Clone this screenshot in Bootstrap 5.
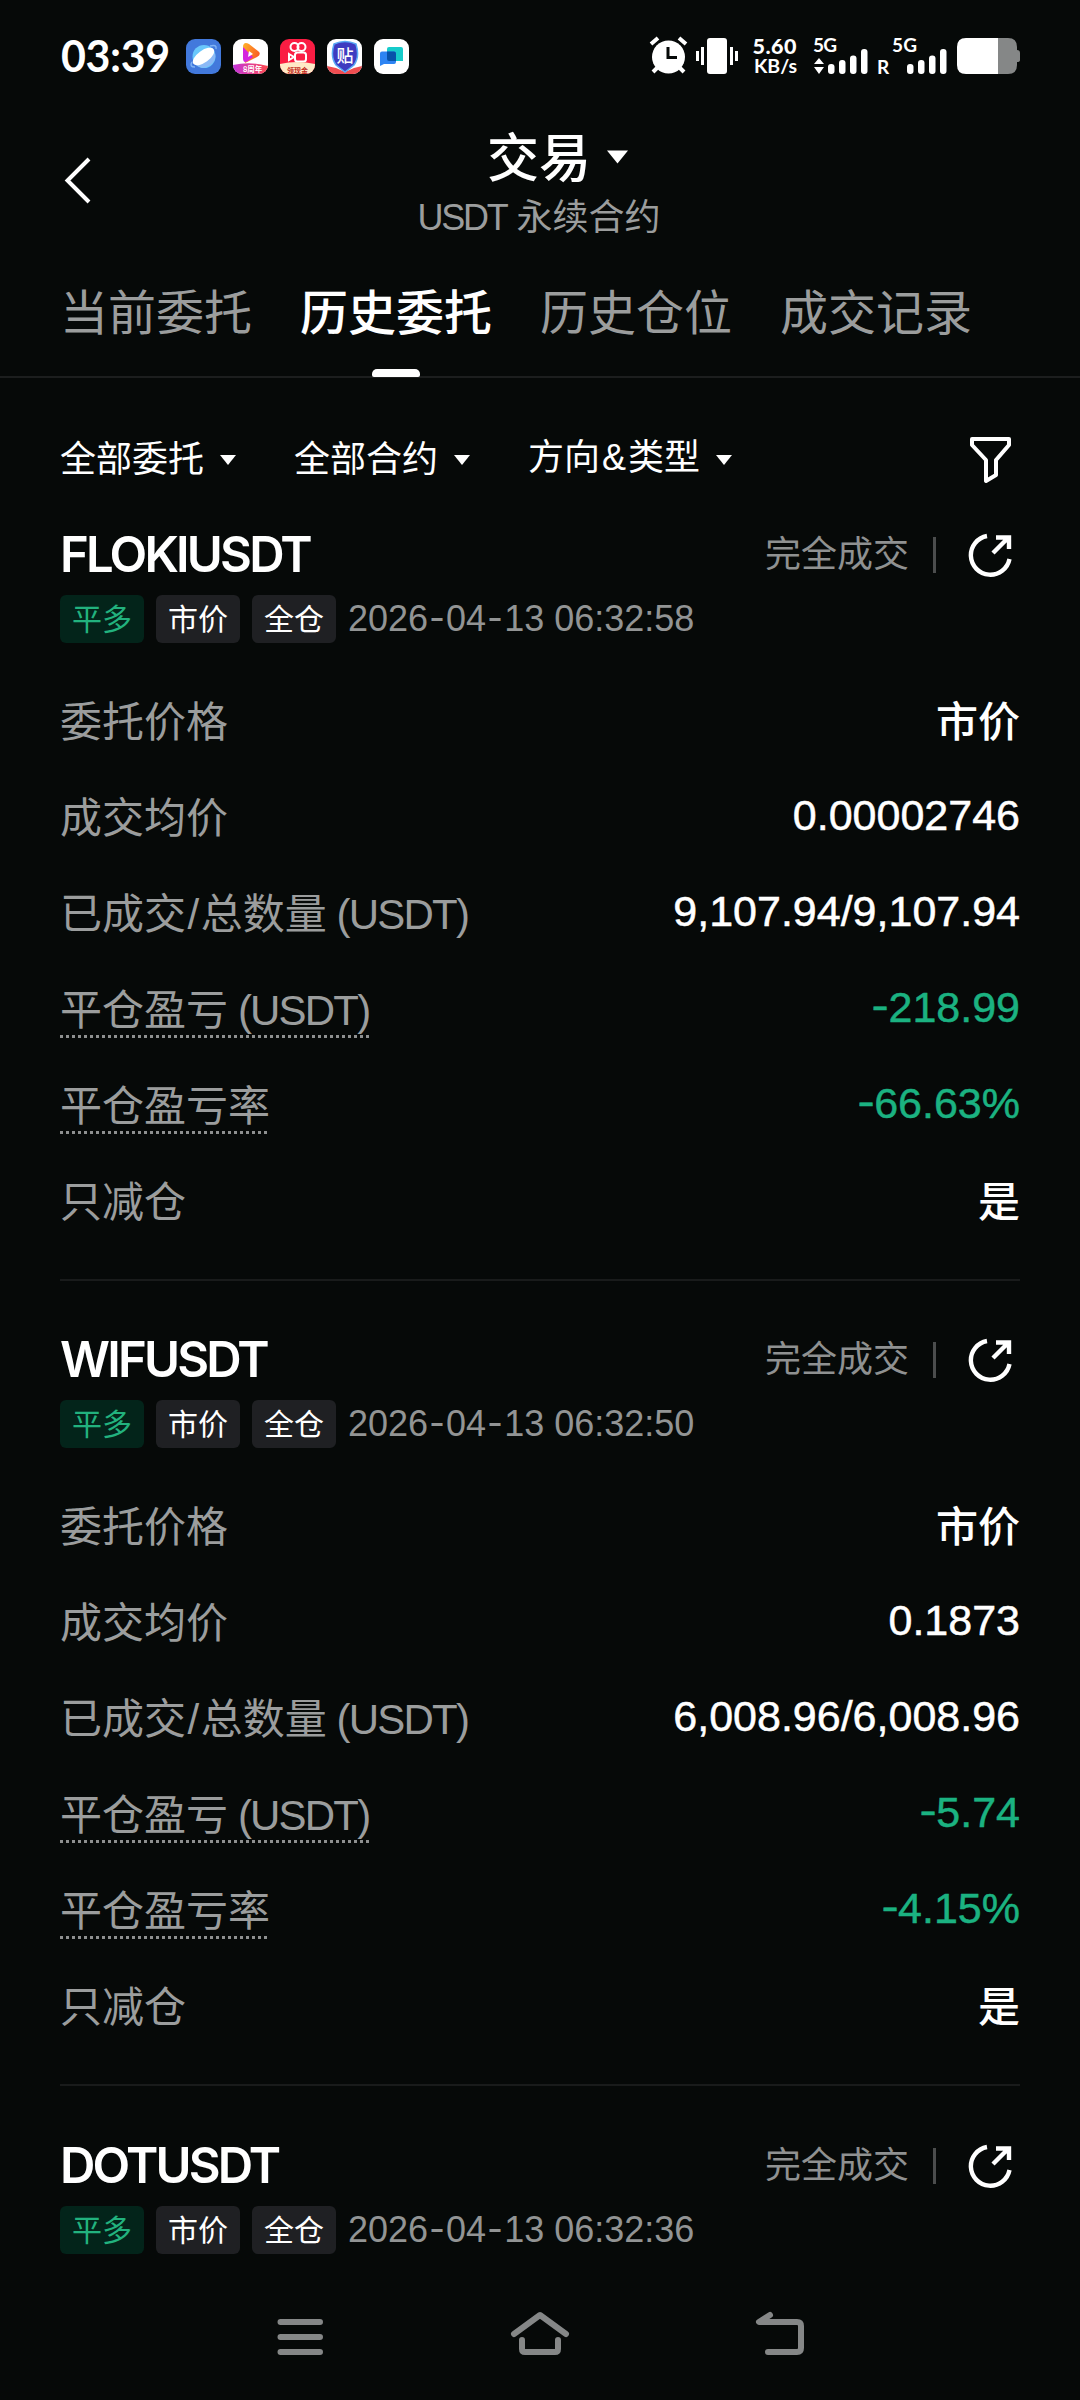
<!DOCTYPE html>
<html lang="zh-CN">
<head>
<meta charset="utf-8">
<meta name="viewport" content="width=device-width, initial-scale=1">
<title>交易</title>
<link href="https://cdn.jsdelivr.net/npm/bootstrap@5.3.0/dist/css/bootstrap.min.css" rel="stylesheet">
<style>
  body { background: #060908; color: #fff; font-family: "Liberation Sans", "Noto Sans CJK SC", sans-serif; width: 1080px; height: 2400px; overflow: hidden; }
  svg { display: block; flex: none; overflow: visible; }
  .dim { color: #9b9d9d; }
  .statusbar { height: 112px; padding: 0 60px 0 61px; font-family: Lato, "Noto Sans CJK SC", sans-serif; font-weight: 700; }
  .clock { font-size: 43px; line-height: 56px; width: 125px; letter-spacing: -.4px; }
  .app-icons { gap: 12px; }
  .app-head { height: 148px; padding: 17px 60px 0; }
  .head-title { font-size: 52px; line-height: 60px; font-weight: 500; gap: 16px; padding-left: 37px; }
  .head-sub { font-size: 36px; line-height: 58px; }
  .head-sub .latin { letter-spacing: -2.2px; }
  .order-tabs { height: 118px; padding: 0 60px; gap: 48px; border-bottom: 2px solid #1c1e1e; }
  .order-tab { font-size: 48px; line-height: 60px; padding-top: 24px; color: #9b9d9d; }
  .order-tab.active { color: #fff; font-weight: 500; }
  .order-tab.active::after { content: ""; display: block; width: 48px; height: 8px; border-radius: 5px 5px 2px 2px; background: #fff; margin: 25px auto 0; }
  .filters { height: 130px; padding: 32px 60px 0; font-size: 36px; line-height: 100px; }
  .filter-item { width: 234px; gap: 16px; height: 100px; }
  .amp { padding: 0 2px; }
  .order { margin: 0 60px; padding-top: 10px; }
  .order + .order { padding-top: 42px; }
  .order + .order:last-child { padding-top: 43px; }
  .order-top { height: 74px; }
  .pair { font-family: Inter, sans-serif; font-size: 49px; font-weight: 600; letter-spacing: -2.8px; line-height: 72px; }
  .state { font-size: 36px; color: #8f9191; }
  .vline { width: 3px; height: 36px; background: #4b4d4d; margin: 0 32px 0 24px; }
  .tags { height: 48px; gap: 12px; margin-top: 3px; }
  .tag { width: 84px; height: 48px; border-radius: 6px; background: #1f2023; font-size: 30px; line-height: 49px; text-align: center; }
  .tag-long { background: #03241a; color: #22b27e; }
  .stamp { font-size: 36px; color: #929494; }
  .stamp i { font-style: normal; display: inline-block; width: 18px; text-align: center; transform: translateY(-2px) scaleX(1.25); }
  .rows { padding: 30px 0; }
  .line { height: 96px; font-size: 42px; line-height: 60px; }
  .line .dim { padding-top: 3px; }
  .latin { letter-spacing: -1.8px; }
  .slash { padding: 0 1.5px; }
  .val { font-size: 43px; font-weight: 400; -webkit-text-stroke: .5px currentColor; padding-bottom: 4px; }
  .val.cjk { font-size: 42px; font-weight: 500; -webkit-text-stroke: 0; padding: 3px 0 0; }
  .val.neg { color: #1bb281; }
  .val.neg i { font-style: normal; display: inline-block; transform: translateY(-2px) scaleX(1.2); padding-right: 1px; }
  .hint { background: repeating-linear-gradient(90deg, #8e9090 0 3px, transparent 3px 6px) left bottom 3px / 100% 3px no-repeat; }
  .rule { height: 2px; background: #191b1b; }
  .sysnav { height: 128px; padding-top: 35px; gap: 180px; }
</style>
</head>
<body class="d-flex flex-column">
<svg width="0" height="0" class="position-absolute">
  <symbol id="share" viewBox="0 0 44 44"><path d="M19 3A19.500 19.500 0 1 0 41.500 26" fill="none" stroke="#fff" stroke-width="4.400"/><path d="M25 20L40 5M28 4.500H41V16" fill="none" stroke="#fff" stroke-width="4.400"/></symbol>
  <symbol id="caret" viewBox="0 0 16 10"><path d="M0 0H16L8 10Z" fill="#fff"/></symbol>
</svg>

<div class="statusbar d-flex align-items-center justify-content-between">
  <div class="d-flex align-items-center">
    <div class="clock">03:39</div>
    <div class="app-icons d-flex">
      <svg width="35" height="35" viewBox="0 0 35 35"><rect width="35" height="35" rx="9" fill="#4279dc"/><circle cx="18" cy="17.500" r="11.500" fill="#6ac8fb"/><path d="M10 26A12 12 0 0 0 29 14Z" fill="#8bb9f6"/><ellipse cx="17.500" cy="17.500" rx="12.500" ry="6" transform="rotate(-36 17.500 17.500)" fill="#fff"/><path d="M24 7Q31 5 30 10M6 23Q3 28 9 28" fill="none" stroke="#7fb2f5" stroke-width="1.500"/></svg>
      <svg width="35" height="35" viewBox="0 0 35 35"><defs><linearGradient id="g1" x2="1" y2=".6"><stop stop-color="#ffb329"/><stop offset="1" stop-color="#fa5a25"/></linearGradient><linearGradient id="g2"><stop stop-color="#c334dc"/><stop offset="1" stop-color="#ff4a4f"/></linearGradient><clipPath id="c1"><rect width="35" height="35" rx="9"/></clipPath></defs><g clip-path="url(#c1)"><rect width="35" height="35" fill="#fff"/><path d="M10 7Q11 2 16 5L25 12Q29 15 24 18L12 24Z" fill="url(#g1)"/><path d="M10 8V19Q10 25 15 22L20 18Z" fill="#d324df"/><path d="M16 12L20 15L15 18Z" fill="#fff"/><path d="M0 26Q17 22 35 27V35H0Z" fill="url(#g2)"/></g><text x="10" y="33" font-size="7.500" fill="#fff">8周年</text></svg>
      <svg width="35" height="35" viewBox="0 0 35 35"><g clip-path="url(#c1)"><rect width="35" height="35" fill="#fa1d43"/><circle cx="14.500" cy="8" r="4" fill="none" stroke="#fff" stroke-width="2"/><circle cx="21.500" cy="8" r="4" fill="none" stroke="#fff" stroke-width="2"/><rect x="15" y="13.500" width="11" height="9" rx="2.500" fill="none" stroke="#fff" stroke-width="2"/><path d="M9 15L14 18L9 21Z" fill="none" stroke="#fff" stroke-width="2"/><path d="M0 25Q17 21 35 25V35H0Z" fill="#ffe9c7"/></g><text x="7" y="33.500" font-size="7" fill="#c12b22">领现金</text></svg>
      <svg width="35" height="35" viewBox="0 0 35 35"><g clip-path="url(#c1)"><rect width="35" height="35" fill="#fff"/><path d="M0 27L9 29L18 33L27 29L35 27V35H0Z" fill="#ef4d50"/><path d="M7 5Q18 0 29 5Q33 18 27 26L18 33L9 26Q3 18 7 5Z" fill="#3f3bc0" stroke="#59aaf5" stroke-width="1.500"/></g><text x="9.500" y="23" font-size="17" font-weight="500" fill="#fff">贴</text></svg>
      <svg width="35" height="35" viewBox="0 0 35 35"><rect width="35" height="35" rx="9" fill="#fff"/><path d="M13 10Q13 8 15 8H27Q29 8 29 10V22H15Q13 22 13 20Z" fill="#16cbca"/><path d="M6 14.500Q6 12.500 8 12.500H20Q22 12.500 22 14.500V23Q22 25 20 25H10L6 27Z" fill="#2d84f3"/><path d="M13 12.500H20Q22 12.500 22 14.500V22H15Q13 22 13 20Z" fill="#0752a9"/></svg>
    </div>
  </div>
  <svg width="372" height="40" viewBox="0 0 372 40" font-family="Lato" font-weight="700" fill="#fff">
    <circle cx="20.500" cy="21" r="16.500"/><path d="M3 8L10 2M31 2L38 8" stroke="#fff" stroke-width="4"/><path d="M9 32L5 36M32 32L36 36" stroke="#fff" stroke-width="4"/><path d="M20 11V21.500H29" fill="none" stroke="#060908" stroke-width="3"/>
    <rect x="59" y="2" width="20" height="36" rx="3"/><path d="M49.500 15V25M54.500 11V29M83.500 11V29M88.500 15V25" stroke="#fff" stroke-width="3"/>
    <text x="104.500" y="17.500" font-size="21.500" textLength="44" font-weight="900">5.60</text>
    <text x="106" y="37" font-size="19.500" textLength="43">KB/s</text>
    <text x="165" y="15.500" font-size="19" textLength="24">5G</text>
    <path d="M166 28L171 22L176 28ZM166 31L171 38L176 31Z"/>
    <rect x="180" y="28" width="6.500" height="10" rx="3"/><rect x="191" y="24" width="6.500" height="14" rx="3"/><rect x="202" y="19.500" width="6.500" height="18.500" rx="3"/><rect x="213" y="13" width="6.500" height="25" rx="3"/>
    <text x="229" y="38" font-size="19">R</text>
    <text x="244" y="15.500" font-size="19" textLength="25">5G</text>
    <rect x="259" y="28" width="6.500" height="10" rx="3"/><rect x="270" y="24" width="6.500" height="14" rx="3"/><rect x="281" y="19.500" width="6.500" height="18.500" rx="3"/><rect x="292" y="13" width="6.500" height="25" rx="3"/>
    <path d="M350 2H360Q369 2 369 11V14Q372 14 372 17V24Q372 26 369 26V29Q369 38 360 38H350Z" fill="#858787"/><path d="M318 2H350V38H318Q309 38 309 29V11Q309 2 318 2Z"/>
  </svg>
</div>

<header class="app-head d-flex">
  <svg width="38" height="52" viewBox="0 0 38 52" class="mt-4"><path d="M29 6L7.500 27.500L29 49" fill="none" stroke="#fff" stroke-width="4"/></svg>
  <div class="flex-grow-1 d-flex flex-column align-items-center me-4 pe-3">
    <div class="head-title d-flex align-items-center"><span>交易</span><svg width="21" height="14" class="mb-1"><use href="#caret"/></svg></div>
    <div class="head-sub dim"><span class="latin">USDT</span> 永续合约</div>
  </div>
</header>

<nav class="order-tabs d-flex">
  <div class="order-tab">当前委托</div>
  <div class="order-tab active">历史委托</div>
  <div class="order-tab">历史仓位</div>
  <div class="order-tab">成交记录</div>
</nav>

<div class="filters d-flex">
  <div class="filter-item d-flex align-items-center"><span>全部委托</span><svg width="16" height="10"><use href="#caret"/></svg></div>
  <div class="filter-item d-flex align-items-center"><span>全部合约</span><svg width="16" height="10"><use href="#caret"/></svg></div>
  <div class="filter-item d-flex align-items-center"><span class="pb-1">方向<span class="amp">&amp;</span>类型</span><svg width="16" height="10"><use href="#caret"/></svg></div>
  <svg class="ms-auto align-self-center me-2" width="43" height="48" viewBox="0 0 43 48"><path d="M3 4H40V10L27 25V40L17 46V25L3 10Z" fill="none" stroke="#fff" stroke-width="4" stroke-linejoin="round"/></svg>
</div>

<main>
  <section class="order">
    <div class="order-top d-flex align-items-center"><div class="pair me-auto">FLOKIUSDT</div><div class="state">完全成交</div><div class="vline"></div><svg width="44" height="44" class="me-2"><use href="#share"/></svg></div>
    <div class="tags d-flex align-items-center"><div class="tag tag-long">平多</div><div class="tag">市价</div><div class="tag">全仓</div><div class="stamp">2026<i>-</i>04<i>-</i>13 06:32:58</div></div>
    <div class="rows">
      <div class="line d-flex align-items-center justify-content-between"><span class="dim">委托价格</span><span class="val cjk">市价</span></div>
      <div class="line d-flex align-items-center justify-content-between"><span class="dim">成交均价</span><span class="val">0.00002746</span></div>
      <div class="line d-flex align-items-center justify-content-between"><span class="dim">已成交<span class="slash">/</span>总数量<span class="latin"> (USDT)</span></span><span class="val">9,107.94/9,107.94</span></div>
      <div class="line d-flex align-items-center justify-content-between"><span class="dim hint">平仓盈亏<span class="latin"> (USDT)</span></span><span class="val neg"><i>-</i>218.99</span></div>
      <div class="line d-flex align-items-center justify-content-between"><span class="dim hint">平仓盈亏率</span><span class="val neg"><i>-</i>66.63%</span></div>
      <div class="line d-flex align-items-center justify-content-between"><span class="dim">只减仓</span><span class="val cjk">是</span></div>
    </div>
    <div class="rule"></div>
  </section>
  <section class="order">
    <div class="order-top d-flex align-items-center"><div class="pair me-auto">WIFUSDT</div><div class="state">完全成交</div><div class="vline"></div><svg width="44" height="44" class="me-2"><use href="#share"/></svg></div>
    <div class="tags d-flex align-items-center"><div class="tag tag-long">平多</div><div class="tag">市价</div><div class="tag">全仓</div><div class="stamp">2026<i>-</i>04<i>-</i>13 06:32:50</div></div>
    <div class="rows">
      <div class="line d-flex align-items-center justify-content-between"><span class="dim">委托价格</span><span class="val cjk">市价</span></div>
      <div class="line d-flex align-items-center justify-content-between"><span class="dim">成交均价</span><span class="val">0.1873</span></div>
      <div class="line d-flex align-items-center justify-content-between"><span class="dim">已成交<span class="slash">/</span>总数量<span class="latin"> (USDT)</span></span><span class="val">6,008.96/6,008.96</span></div>
      <div class="line d-flex align-items-center justify-content-between"><span class="dim hint">平仓盈亏<span class="latin"> (USDT)</span></span><span class="val neg"><i>-</i>5.74</span></div>
      <div class="line d-flex align-items-center justify-content-between"><span class="dim hint">平仓盈亏率</span><span class="val neg"><i>-</i>4.15%</span></div>
      <div class="line d-flex align-items-center justify-content-between"><span class="dim">只减仓</span><span class="val cjk">是</span></div>
    </div>
    <div class="rule"></div>
  </section>
  <section class="order">
    <div class="order-top d-flex align-items-center"><div class="pair me-auto">DOTUSDT</div><div class="state">完全成交</div><div class="vline"></div><svg width="44" height="44" class="me-2"><use href="#share"/></svg></div>
    <div class="tags d-flex align-items-center"><div class="tag tag-long">平多</div><div class="tag">市价</div><div class="tag">全仓</div><div class="stamp">2026<i>-</i>04<i>-</i>13 06:32:36</div></div>
  </section>
</main>

<div class="sysnav d-flex justify-content-center mt-auto">
  <svg width="60" height="56" viewBox="270 2307 60 56"><path d="M280.500 2322H320M280.500 2337H320M280.500 2352H320" stroke="#858787" stroke-width="6" stroke-linecap="round"/></svg>
  <svg width="60" height="56" viewBox="510 2307 60 56"><path d="M514 2334L540 2315L566 2334M522 2340V2349Q522 2352 525 2352H555Q558 2352 558 2349V2340" fill="none" stroke="#858787" stroke-width="6" stroke-linecap="round" stroke-linejoin="round"/></svg>
  <svg width="60" height="56" viewBox="750 2307 60 56"><path d="M770 2315L759 2322H797Q801 2322 801 2326V2348Q801 2352 797 2352H768" fill="none" stroke="#858787" stroke-width="6" stroke-linecap="round" stroke-linejoin="round"/></svg>
</div>
<script src="https://cdn.jsdelivr.net/npm/bootstrap@5.3.0/dist/js/bootstrap.bundle.min.js"></script>
</body>
</html>
